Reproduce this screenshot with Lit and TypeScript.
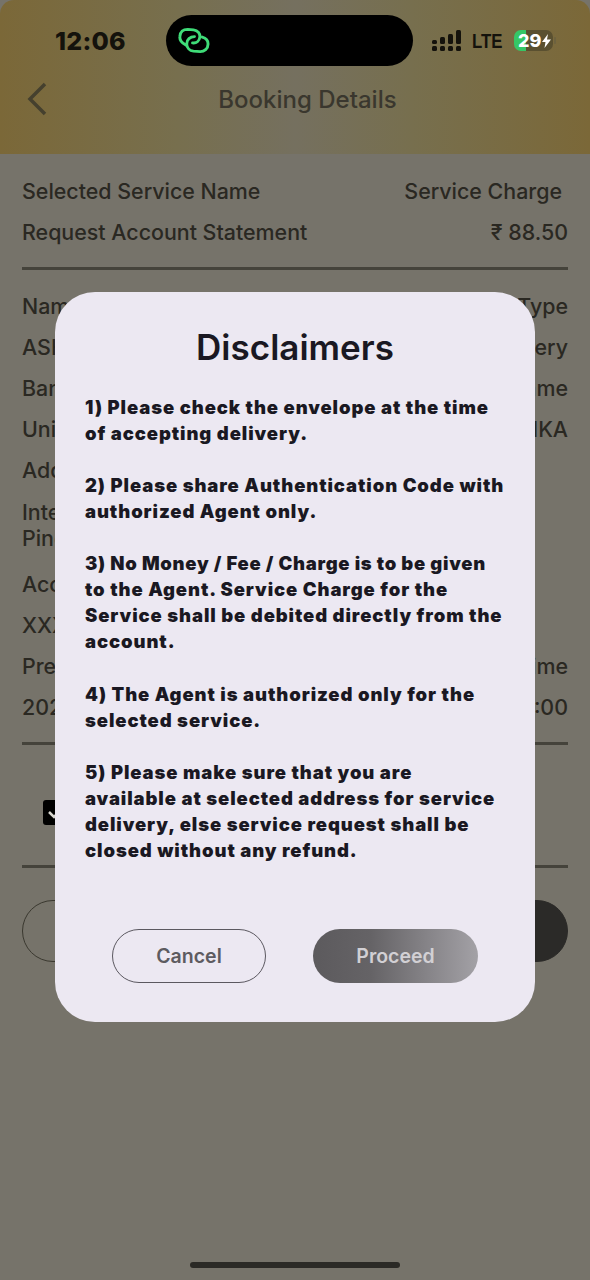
import { LitElement, html, css } from "lit";
import { customElement } from "lit/decorators.js";

type Row = [string, string];
const rowsTop: Row[] = [
  ["Name", "Type"],
  ["ASHO", "very"],
  ["Ban", "ame"],
  ["Unio", "ANKA"],
  ["Addr", ""],
];
const rowsMid: Row[] = [
  ["Acco", ""],
  ["XXXX", ""],
  ["Pref", "ime"],
  ["2024", "0:00"],
];

@customElement("app-root")
export class AppRoot extends LitElement {
  static styles = css`
    :host {
      display: block;
      position: relative;
      width: 590px;
      height: 1280px;
      overflow: hidden;
      background: #76736a;
      font-family: "Inter", "Noto Sans", sans-serif;
      color: #2a2822;
    }
    .header {
      height: 154px;
      box-sizing: border-box;
      background: linear-gradient(90deg, #7b6838 0%, #776f4e 30%, #75705f 50%, #776f4e 70%, #7b6838 100%);
      border-radius: 14px 14px 0 0;
      padding-top: 15px;
    }
    .status {
      display: flex;
      align-items: center;
      height: 51px;
      padding-left: 55px;
    }
    .time {
      width: 111px;
      font-weight: 800;
      font-size: 25px;
      letter-spacing: 0.2px;
      color: #14120c;
    }
    .island {
      width: 247px;
      height: 51px;
      border-radius: 26px;
      background: #000;
      display: flex;
      align-items: center;
      padding-left: 12px;
      box-sizing: border-box;
    }
    .signal {
      margin-left: 19px;
    }
    .lte {
      margin: 0 10px;
      width: 32px;
      font-family: "Liberation Sans", sans-serif;
      font-weight: 700;
      font-size: 21px;
      color: #14120c;
      transform: scaleX(0.8);
      transform-origin: left center;
    }
    .battery {
      position: relative;
      width: 39px;
      height: 21px;
      border-radius: 7px;
      background: linear-gradient(90deg, #35c766 0 12px, #5a5030 12px);
      font-weight: 800;
      font-size: 18px;
      line-height: 21px;
      color: #fff;
      padding-left: 4px;
      box-sizing: border-box;
      display: flex;
      align-items: center;
      gap: 1px;
    }
    .battery::after {
      content: "";
      position: absolute;
      left: 40px;
      top: 7px;
      width: 2px;
      height: 7px;
      border-radius: 1px;
      background: #6d623f;
    }
    .nav {
      display: grid;
      grid-template-columns: 1fr auto 1fr;
      align-items: center;
      height: 66px;
      padding: 0 2px 0 27px;
    }
    .title {
      font-size: 24px;
      color: #3a372e;
      font-weight: 500;
    }
    .content {
      padding: 16px 22px 0;
      font-size: 21.4px;
      font-weight: 500;
    }
    .row {
      display: flex;
      justify-content: space-between;
      height: 41px;
      line-height: 43px;
      white-space: nowrap;
    }
    .inset {
      padding-right: 6px;
    }
    .rule {
      height: 3px;
      background: #45433b;
      margin: 15px 0;
    }
    .rule.flush {
      margin: 0;
    }
    .stack {
      height: 73px;
      padding-top: 8.5px;
      box-sizing: border-box;
      line-height: 26px;
      white-space: nowrap;
    }
    .check {
      display: flex;
      align-items: center;
      height: 105px;
      padding-left: 21px;
    }
    .box {
      width: 25px;
      height: 25px;
      border-radius: 3px;
      background: #000;
      display: flex;
      align-items: center;
      justify-content: center;
    }
    .under-actions {
      display: flex;
      justify-content: space-between;
      margin-top: 32px;
    }
    .under-btn {
      width: 240px;
      height: 62px;
      border-radius: 31px;
      box-sizing: border-box;
      border: 1.5px solid #3a382f;
    }
    .under-btn.solid {
      background: #2b2a28;
      border-color: #2b2a28;
    }
    .indicator {
      position: absolute;
      left: 190px;
      top: 1262px;
      width: 210px;
      height: 6px;
      border-radius: 3px;
      background: #2b2a26;
    }
    .modal {
      position: absolute;
      left: 55px;
      top: 292px;
      width: 480px;
      height: 730px;
      box-sizing: border-box;
      border-radius: 40px;
      background: #ece8f2;
      padding: 30px 30px 39px;
      display: flex;
      flex-direction: column;
      color: #1a1822;
    }
    h1 {
      margin: 0;
      text-align: center;
      font-size: 35px;
      line-height: 50px;
      font-weight: 600;
    }
    .terms {
      margin-top: 22px;
      font-size: 18.5px;
      font-weight: 900;
      line-height: 26.05px;
      letter-spacing: 0.9px;
      white-space: nowrap;
    }
    .terms p {
      margin: 0 0 26.05px;
    }
    .terms .tight {
      letter-spacing: 0.7px;
    }
    .actions {
      margin-top: auto;
      display: flex;
      gap: 47px;
      padding-left: 27px;
    }
    .btn {
      height: 54px;
      border-radius: 27px;
      box-sizing: border-box;
      display: flex;
      align-items: center;
      justify-content: center;
      font-size: 19.5px;
      font-weight: 600;
    }
    .cancel {
      width: 154px;
      border: 1.5px solid #5b5860;
      color: #5d5b60;
    }
    .proceed {
      width: 165px;
      background: linear-gradient(90deg, #5c5a5d 0%, #656366 35%, #a3a1a6 100%);
      color: #d2d0d4;
    }
  `;

  private row(r: Row) {
    return html`<div class="row"><span>${r[0]}</span><span>${r[1]}</span></div>`;
  }

  render() {
    return html`
      <div class="header">
        <div class="status">
          <div class="time">12:06</div>
          <div class="island">
            <svg width="32" height="27" viewBox="0 0 33 27" fill="none" stroke="#3fdc78" stroke-width="3" stroke-linecap="round">
              <path d="M8 18 C3 15.500 1.500 12 2 9 C2.500 4 6 2 10 2 L16 2.500 C20.500 3 23 6.500 22.500 10 C22 14 19 16.500 15 16" />
              <path d="M25 10 C29 11 31 14 31 17 C31 22 27 25 23 25 L16 24.500 C12 24 9 21 9 17 C9 12.500 12.500 9.500 17 9.500" />
            </svg>
          </div>
          <svg class="signal" width="30" height="21" viewBox="0 0 30 21" fill="#14120c">
            <rect x="0" y="10" width="5" height="4" rx="1.500" /><rect x="0" y="16" width="5" height="5" rx="1.500" />
            <rect x="8" y="7" width="5" height="7" rx="1.500" /><rect x="8" y="16" width="5" height="5" rx="1.500" />
            <rect x="16" y="4" width="5" height="10" rx="1.500" /><rect x="16" y="16" width="5" height="5" rx="1.500" />
            <rect x="24" y="0" width="5" height="14" rx="1.500" /><rect x="24" y="16" width="5" height="5" rx="1.500" />
          </svg>
          <div class="lte">LTE</div>
          <div class="battery">
            29<svg width="9" height="14" viewBox="0 0 9 14" fill="#fff"><path d="M6 0 L0 8 H3.500 L2.500 14 L9 5.500 H5 Z" /></svg>
          </div>
        </div>
        <div class="nav">
          <svg width="20" height="34" viewBox="0 0 20 34" fill="none" stroke="#45402e" stroke-width="3.500">
            <path d="M18 2 L3 17 L18 32" />
          </svg>
          <div class="title">Booking Details</div>
          <div></div>
        </div>
      </div>

      <div class="content">
        <div class="row"><span>Selected Service Name</span><span class="inset">Service Charge</span></div>
        <div class="row"><span>Request Account Statement</span><span>₹ 88.50</span></div>
        <div class="rule"></div>
        ${rowsTop.map((r) => this.row(r))}
        <div class="stack">Inter<br />Pinc</div>
        ${rowsMid.map((r) => this.row(r))}
        <div class="rule"></div>
        <div class="check">
          <div class="box">
            <svg width="17" height="13" viewBox="0 0 17 13" fill="none" stroke="#d8d6cf" stroke-width="2.500"><path d="M2 6 L7 11 L15 2" /></svg>
          </div>
        </div>
        <div class="rule flush"></div>
        <div class="under-actions">
          <div class="under-btn"></div>
          <div class="under-btn solid"></div>
        </div>
      </div>

      <div class="indicator"></div>

      <div class="modal">
        <h1>Disclaimers</h1>
        <div class="terms">
          <p>1) Please check the envelope at the time<br />of accepting delivery.</p>
          <p>2) Please share Authentication Code with<br />authorized Agent only.</p>
          <p><span class="tight">3) No Money / Fee / Charge is to be given</span><br />to the Agent. Service Charge for the<br />Service shall be debited directly from the<br />account.</p>
          <p>4) The Agent is authorized only for the<br />selected service.</p>
          <p>5) Please make sure that you are<br />available at selected address for service<br />delivery, else service request shall be<br />closed without any refund.</p>
        </div>
        <div class="actions">
          <div class="btn cancel">Cancel</div>
          <div class="btn proceed">Proceed</div>
        </div>
      </div>
    `;
  }
}
